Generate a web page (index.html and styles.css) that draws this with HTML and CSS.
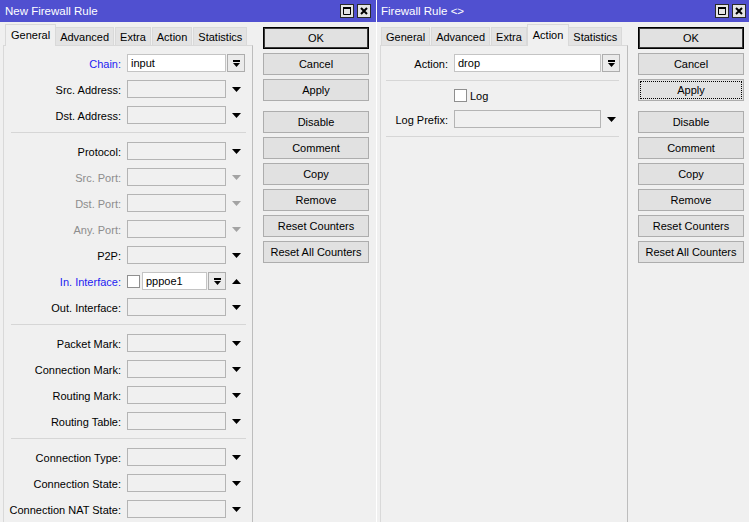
FILE: index.html
```html
<!DOCTYPE html>
<html>
<head>
<meta charset="utf-8">
<title>Firewall Rule</title>
<link rel="stylesheet" href="styles.css">
</head>
<body>
<div class="desk">
  <div class="win win1">
    <div class="titlebar">
      <span class="title">New Firewall Rule</span>
      <span class="tbtns">
        <span class="tbtn"><svg width="12" height="12" viewBox="0 0 12 12"><path d="M2.5 2.5h7v7h-7z" fill="none" stroke="#000" stroke-width="1"/><rect x="2" y="2" width="8" height="2" fill="#000"/></svg></span>
        <span class="tbtn"><svg width="12" height="12" viewBox="0 0 12 12"><path d="M3 3l6 6M9 3l-6 6" stroke="#000" stroke-width="2"/></svg></span>
      </span>
    </div>
    <div class="body">
      <div class="main">
        <div class="tabs">
          <div class="tab sel first">General</div>
          <div class="tab">Advanced</div>
          <div class="tab">Extra</div>
          <div class="tab">Action</div>
          <div class="tab">Statistics</div>
        </div>
        <div class="panel">
          <div class="row"><span class="lbl blue">Chain:</span><span class="box white">input</span><span class="dd"><svg width="7" height="7" viewBox="0 0 7 7"><rect width="7" height="2"/><path d="M0 3h7l-3.5 4z"/></svg></span></div>
          <div class="row"><span class="lbl">Src. Address:</span><span class="box"></span><span class="arr"><svg width="9" height="5" viewBox="0 0 9 5"><path d="M0 0h9l-4.5 5z"/></svg></span></div>
          <div class="row"><span class="lbl">Dst. Address:</span><span class="box"></span><span class="arr"><svg width="9" height="5" viewBox="0 0 9 5"><path d="M0 0h9l-4.5 5z"/></svg></span></div>
          <div class="sep"></div>
          <div class="row"><span class="lbl">Protocol:</span><span class="box"></span><span class="arr"><svg width="9" height="5" viewBox="0 0 9 5"><path d="M0 0h9l-4.5 5z"/></svg></span></div>
          <div class="row"><span class="lbl gray">Src. Port:</span><span class="box"></span><span class="arr dis"><svg width="9" height="5" viewBox="0 0 9 5"><path d="M0 0h9l-4.5 5z"/></svg></span></div>
          <div class="row"><span class="lbl gray">Dst. Port:</span><span class="box"></span><span class="arr dis"><svg width="9" height="5" viewBox="0 0 9 5"><path d="M0 0h9l-4.5 5z"/></svg></span></div>
          <div class="row"><span class="lbl gray">Any. Port:</span><span class="box"></span><span class="arr dis"><svg width="9" height="5" viewBox="0 0 9 5"><path d="M0 0h9l-4.5 5z"/></svg></span></div>
          <div class="row"><span class="lbl">P2P:</span><span class="box"></span><span class="arr"><svg width="9" height="5" viewBox="0 0 9 5"><path d="M0 0h9l-4.5 5z"/></svg></span></div>
          <div class="row"><span class="lbl blue">In. Interface:</span><span class="chk"></span><span class="box white short">pppoe1</span><span class="dd"><svg width="7" height="7" viewBox="0 0 7 7"><rect width="7" height="2"/><path d="M0 3h7l-3.5 4z"/></svg></span><span class="arr"><svg width="9" height="5" viewBox="0 0 9 5"><path d="M0 5h9l-4.5-5z"/></svg></span></div>
          <div class="row"><span class="lbl">Out. Interface:</span><span class="box"></span><span class="arr"><svg width="9" height="5" viewBox="0 0 9 5"><path d="M0 0h9l-4.5 5z"/></svg></span></div>
          <div class="sep"></div>
          <div class="row"><span class="lbl">Packet Mark:</span><span class="box"></span><span class="arr"><svg width="9" height="5" viewBox="0 0 9 5"><path d="M0 0h9l-4.5 5z"/></svg></span></div>
          <div class="row"><span class="lbl">Connection Mark:</span><span class="box"></span><span class="arr"><svg width="9" height="5" viewBox="0 0 9 5"><path d="M0 0h9l-4.5 5z"/></svg></span></div>
          <div class="row"><span class="lbl">Routing Mark:</span><span class="box"></span><span class="arr"><svg width="9" height="5" viewBox="0 0 9 5"><path d="M0 0h9l-4.5 5z"/></svg></span></div>
          <div class="row"><span class="lbl">Routing Table:</span><span class="box"></span><span class="arr"><svg width="9" height="5" viewBox="0 0 9 5"><path d="M0 0h9l-4.5 5z"/></svg></span></div>
          <div class="sep"></div>
          <div class="row"><span class="lbl">Connection Type:</span><span class="box"></span><span class="arr"><svg width="9" height="5" viewBox="0 0 9 5"><path d="M0 0h9l-4.5 5z"/></svg></span></div>
          <div class="row"><span class="lbl">Connection State:</span><span class="box"></span><span class="arr"><svg width="9" height="5" viewBox="0 0 9 5"><path d="M0 0h9l-4.5 5z"/></svg></span></div>
          <div class="row"><span class="lbl">Connection NAT State:</span><span class="box"></span><span class="arr"><svg width="9" height="5" viewBox="0 0 9 5"><path d="M0 0h9l-4.5 5z"/></svg></span></div>
        </div>
      </div>
      <div class="btns">
        <div class="btn def">OK</div>
        <div class="btn">Cancel</div>
        <div class="btn gapafter">Apply</div>
        <div class="btn">Disable</div>
        <div class="btn">Comment</div>
        <div class="btn">Copy</div>
        <div class="btn">Remove</div>
        <div class="btn">Reset Counters</div>
        <div class="btn">Reset All Counters</div>
      </div>
    </div>
  </div>
  <div class="divider"></div>
  <div class="win win2">
    <div class="titlebar">
      <span class="title">Firewall Rule &lt;&gt;</span>
      <span class="tbtns">
        <span class="tbtn"><svg width="12" height="12" viewBox="0 0 12 12"><path d="M2.5 2.5h7v7h-7z" fill="none" stroke="#000" stroke-width="1"/><rect x="2" y="2" width="8" height="2" fill="#000"/></svg></span>
        <span class="tbtn"><svg width="12" height="12" viewBox="0 0 12 12"><path d="M3 3l6 6M9 3l-6 6" stroke="#000" stroke-width="2"/></svg></span>
      </span>
    </div>
    <div class="body">
      <div class="main">
        <div class="tabs">
          <div class="tab">General</div>
          <div class="tab">Advanced</div>
          <div class="tab">Extra</div>
          <div class="tab sel">Action</div>
          <div class="tab">Statistics</div>
        </div>
        <div class="panel">
          <div class="row"><span class="lbl">Action:</span><span class="box white">drop</span><span class="dd"><svg width="7" height="7" viewBox="0 0 7 7"><rect width="7" height="2"/><path d="M0 3h7l-3.5 4z"/></svg></span></div>
          <div class="sep first"></div>
          <div class="logrow"><span class="chk"></span><span class="logtxt">Log</span></div>
          <div class="row"><span class="lbl">Log Prefix:</span><span class="box"></span><span class="arr"><svg width="9" height="5" viewBox="0 0 9 5"><path d="M0 0h9l-4.5 5z"/></svg></span></div>
          <div class="sep"></div>
        </div>
      </div>
      <div class="btns">
        <div class="btn def">OK</div>
        <div class="btn">Cancel</div>
        <div class="btn gapafter focus">Apply</div>
        <div class="btn">Disable</div>
        <div class="btn">Comment</div>
        <div class="btn">Copy</div>
        <div class="btn">Remove</div>
        <div class="btn">Reset Counters</div>
        <div class="btn">Reset All Counters</div>
      </div>
    </div>
  </div>
</div>
</body>
</html>
```
FILE: styles.css
```css
html, body {
  margin: 0;
  padding: 0;
  height: 522px;
  overflow: hidden;
  background: #f0f0f0;
}
body {
  font-family: "Liberation Sans", Arial, sans-serif;
  font-size: 11px;
  color: #000;
}
.desk {
  display: flex;
  height: 522px;
}
.win {
  display: flex;
  flex-direction: column;
  background: #f0f0f0;
  height: 522px;
}
.win1 { width: 376px; }
.win2 { width: 372px; }
.divider {
  width: 1px;
  background: #ffffff;
}
.titlebar {
  height: 22px;
  background: #5050d0;
  color: #fff;
  display: flex;
  align-items: center;
  justify-content: space-between;
  flex: none;
}
.title {
  padding-left: 5px;
  font-size: 11.5px;
  white-space: nowrap;
}
.win2 .title { padding-left: 4px; }
.tbtns {
  display: flex;
  gap: 3px;
  padding-right: 5px;
}
.win2 .tbtns { padding-right: 3px; }
.tbtn {
  width: 14px;
  height: 14px;
  box-sizing: border-box;
  border: 1px solid #2a2a2a;
  background: #e4e4e4;
  display: flex;
  align-items: center;
  justify-content: center;
}
.tbtn svg { display: block; }
.body {
  display: flex;
  flex: 1;
  padding-left: 3px;
  min-height: 0;
}
.main {
  display: flex;
  flex-direction: column;
}
.win1 .main { width: 250px; }
.win2 .main { width: 248px; }
.tabs {
  display: flex;
  align-items: flex-end;
  height: 23px;
  padding-left: 2px;
  flex: none;
}
.win2 .tabs { padding-left: 1px; }
.tab {
  height: 18px;
  box-sizing: border-box;
  border: 1px solid #d9d9d9;
  border-bottom: none;
  background: #e3e3e3;
  padding: 0 4px;
  margin-right: 1px;
  line-height: 18px;
  white-space: nowrap;
}
.tab.sel {
  height: 22px;
  margin: 0 -1px -1px -1px;
  padding: 0 5px;
  line-height: 20px;
  background: #f0f0f0;
  position: relative;
  z-index: 1;
}
.tab.sel.first { margin-left: 0; }
.panel {
  flex: 1;
  border: 1px solid #d9d9d9;
  border-right-color: #bdbdbd;
  border-bottom: none;
  padding-top: 8px;
}
.row {
  display: flex;
  align-items: center;
  height: 18px;
  margin-bottom: 8px;
}
.lbl {
  text-align: right;
  margin-right: 6px;
  margin-top: 2px;
  white-space: nowrap;
  flex: none;
}
.win1 .lbl { width: 117px; }
.win2 .lbl { width: 67px; }
.lbl.blue { color: #1d1df2; }
.lbl.gray { color: #8d8d8d; }
.box {
  height: 18px;
  box-sizing: border-box;
  border: 1px solid #b4b4b4;
  background: #f0f0f0;
  padding-left: 3px;
  line-height: 17px;
  flex: none;
}
.win1 .box { width: 99px; }
.win2 .box { width: 147px; }
.box.white {
  background: #fff;
  border-color: #c4c4c4;
}
.win1 .box.short { width: 65px; margin-left: 2px; }
.dd {
  width: 18px;
  height: 18px;
  box-sizing: border-box;
  margin-left: 1px;
  border: 1px solid #adadad;
  background: #ebebeb;
  display: flex;
  align-items: center;
  justify-content: center;
  flex: none;
}
.dd svg { display: block; fill: #000; }
.arr {
  width: 20px;
  height: 18px;
  display: flex;
  align-items: center;
  justify-content: center;
  flex: none;
}
.arr svg { display: block; fill: #000; }
.arr.dis svg { fill: #a3a3a3; }
.chk {
  width: 13px;
  height: 13px;
  box-sizing: border-box;
  border: 1px solid #8f8f8f;
  background: #fff;
  flex: none;
}
.sep {
  height: 1px;
  background: #d6d6d6;
  margin-top: 1px;
  margin-bottom: 9px;
}
.win1 .sep { margin-left: 7px; margin-right: 6px; }
.win2 .sep { margin-left: 5px; margin-right: 8px; }
.win2 .sep.first { margin-bottom: 8px; }
.logrow {
  display: flex;
  align-items: center;
  height: 13px;
  margin-bottom: 8px;
  padding-left: 73px;
}
.logtxt { margin-left: 3px; margin-top: 1px; }
.btns {
  width: 106px;
  margin-left: 10px;
  padding-top: 5px;
  display: flex;
  flex-direction: column;
  flex: none;
}
.btn {
  height: 22px;
  box-sizing: border-box;
  border: 1px solid #adadad;
  background: #e1e1e1;
  text-align: center;
  line-height: 21px;
  margin-bottom: 4px;
  white-space: nowrap;
}
.btn.def {
  border-color: #000;
  box-shadow: inset 0 0 0 1px #3a3a3a;
}
.btn.gapafter { margin-bottom: 10px; }
.btn.focus {
  outline: 1px dotted #000;
  outline-offset: -3px;
}
```
